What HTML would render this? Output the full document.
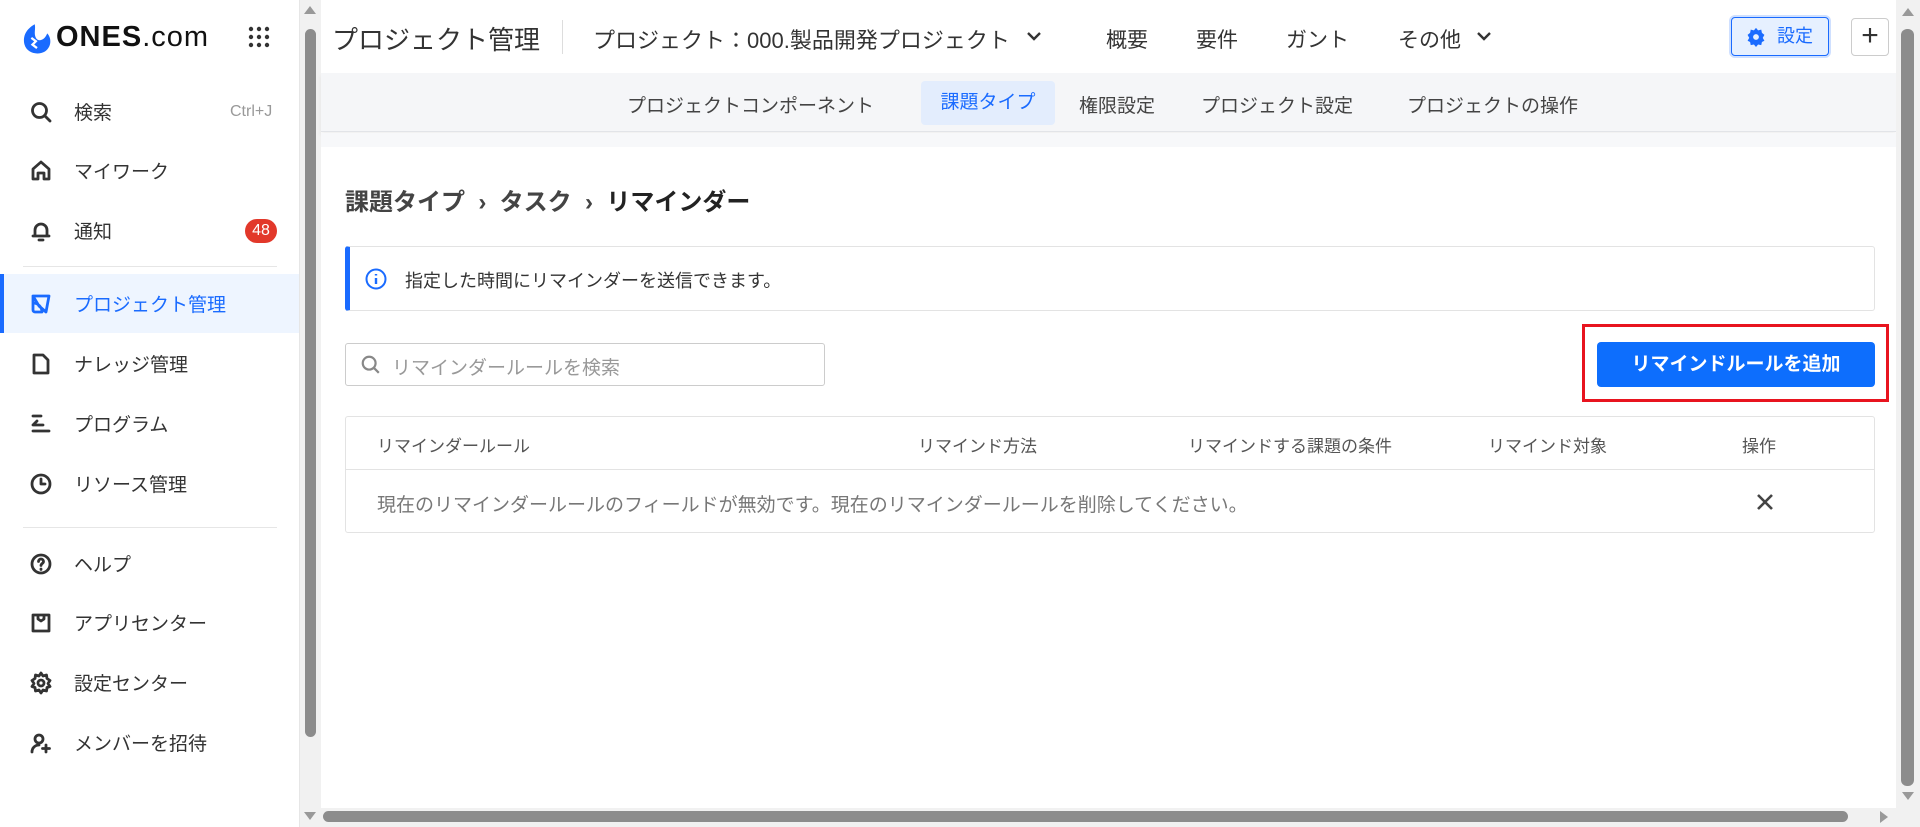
<!DOCTYPE html><html><head><meta charset="utf-8"><style>
*{box-sizing:border-box;margin:0;padding:0}
body{width:1920px;height:827px;overflow:hidden;background:#fff;font-family:"Liberation Sans","Noto Sans CJK JP",sans-serif;color:#303030;position:relative}
.a{position:absolute;white-space:nowrap}
.side .it{position:absolute;left:0;width:299px;height:59px;display:flex;align-items:center;font-size:19px;color:#333}
.side .it svg{position:absolute;left:29px}
.side .it span{position:absolute;left:74px}
.ico{width:24px;height:24px;fill:none;stroke:#333;stroke-width:2.8;stroke-linecap:round;stroke-linejoin:round}
</style></head><body>
<div class="side">
<div class="a" style="left:20px;top:22px;width:34px;height:34px"><svg width="34" height="34" viewBox="0 0 30 30"><path d="M13 2 C6 6 2 12 4 20 C6 27 15 30 22 26 C28 22 28 14 24 10 C22 16 16 18 14 14 C12 10 14 6 13 2Z" fill="#1a6bff"/><path d="M10 14 l4 3 l-3 3 l4 3" stroke="#fff" stroke-width="2" fill="none"/></svg></div>
<div class="a" style="left:56px;top:21px;font-size:29px;font-weight:bold;color:#111;letter-spacing:1px">ONES<span style="font-weight:normal">.com</span></div>
<svg class="a" style="left:248px;top:26px" width="22" height="22"><g fill="#333"><circle cx="3" cy="3" r="2.2"/><circle cx="11" cy="3" r="2.2"/><circle cx="19" cy="3" r="2.2"/><circle cx="3" cy="11" r="2.2"/><circle cx="11" cy="11" r="2.2"/><circle cx="19" cy="11" r="2.2"/><circle cx="3" cy="19" r="2.2"/><circle cx="11" cy="19" r="2.2"/><circle cx="19" cy="19" r="2.2"/></g></svg>
<div class="it" style="top:82px"><svg class="ico" viewBox="0 0 24 24"><circle cx="10.5" cy="10.5" r="7"/><path d="M16 16l5 5"/></svg><span>検索</span><span style="left:230px;font-size:16px;color:#999">Ctrl+J</span></div>
<div class="it" style="top:141px"><svg class="ico" viewBox="0 0 24 24"><path d="M4 20V10l8-7 8 7v10h-5v-6H9v6z"/></svg><span>マイワーク</span></div>
<div class="it" style="top:201px"><svg class="ico" viewBox="0 0 24 24"><path d="M6 17V11a6 6 0 0112 0v6H4h16M10 21h4"/></svg><span>通知</span><div class="a" style="left:245px;top:18px;width:32px;height:24px;border-radius:12px;background:#e2382a;color:#fff;font-size:16px;text-align:center;line-height:24px">48</div></div>
<div class="a" style="left:23px;top:266px;width:254px;height:1px;background:#e6e6e6"></div>
<div class="it" style="top:274px;background:#eef5ff;color:#1a6bff"><div class="a" style="left:0;top:0;width:4px;height:59px;background:#1a6bff"></div><svg class="ico" viewBox="0 0 24 24" style="stroke:#1a6bff"><path d="M4 4h16l-3 16-7-6zM4 4v7a9 9 0 019 9H6a2 2 0 01-2-2z"/></svg><span>プロジェクト管理</span></div>
<div class="it" style="top:334px"><svg class="ico" viewBox="0 0 24 24"><path d="M5 3h9l5 5v13H5z"/></svg><span>ナレッジ管理</span></div>
<div class="it" style="top:394px"><svg class="ico" viewBox="0 0 24 24"><path d="M4 4h8M8 9l-4 4h10M4 19h16"/></svg><span>プログラム</span></div>
<div class="it" style="top:454px"><svg class="ico" viewBox="0 0 24 24"><circle cx="12" cy="12" r="9"/><path d="M12 7v5h4"/></svg><span>リソース管理</span></div>
<div class="a" style="left:23px;top:527px;width:254px;height:1px;background:#e6e6e6"></div>
<div class="it" style="top:534px"><svg class="ico" viewBox="0 0 24 24"><circle cx="12" cy="12" r="9"/><path d="M9.5 9.5a2.5 2.5 0 115 0c0 2-2.5 2-2.5 4M12 17v.5"/></svg><span>ヘルプ</span></div>
<div class="it" style="top:593px"><svg class="ico" viewBox="0 0 24 24"><path d="M4 4h16v16H4zM9 4v4l3 2 3-2V4"/></svg><span>アプリセンター</span></div>
<div class="it" style="top:653px"><svg class="ico" viewBox="0 0 24 24"><circle cx="12" cy="12" r="3"/><path d="M12 2l2 3 3.5-1 .5 3.5 3 2-2 3 2 3-3 1-.5 3.5-3.5-1-2 3-2-3-3.5 1-.5-3.5-3-1 2-3-2-3 3-2 .5-3.5 3.5 1z"/></svg><span>設定センター</span></div>
<div class="it" style="top:713px"><svg class="ico" viewBox="0 0 24 24"><circle cx="10" cy="8" r="4"/><path d="M3 21c0-4 3-7 7-7M17 14v7M13.5 17.5h7"/></svg><span>メンバーを招待</span></div>
</div>
<div class="a" style="left:299px;top:0;width:1px;height:827px;background:#e6e6e6"></div>
<div class="a" style="left:300px;top:0;width:21px;height:827px;background:#f1f1f1"></div>
<div class="a" style="left:305px;top:29px;width:11px;height:708px;background:#8c8c8c;border-radius:6px"></div>
<div class="a" style="left:304px;top:6px;border:6px solid transparent;border-bottom:8px solid #999;border-top:0"></div>
<div class="a" style="left:304px;top:812px;border:6px solid transparent;border-top:8px solid #999;border-bottom:0"></div>
<div class="a" style="left:332px;top:20px;font-size:26px;color:#333">プロジェクト管理</div>
<div class="a" style="left:562px;top:20px;width:1px;height:34px;background:#ddd"></div>
<div class="a" style="left:593px;top:23px;font-size:22px;color:#333">プロジェクト：000.製品開発プロジェクト</div>
<svg class="a" style="left:1026px;top:30px" width="16" height="12"><path d="M2 3l6 6 6-6" stroke="#333" stroke-width="2.4" fill="none"/></svg>
<div class="a" style="left:1106px;top:24px;font-size:21px;color:#333">概要</div>
<div class="a" style="left:1196px;top:24px;font-size:21px;color:#333">要件</div>
<div class="a" style="left:1286px;top:24px;font-size:21px;color:#333">ガント</div>
<div class="a" style="left:1398px;top:24px;font-size:21px;color:#333">その他</div>
<svg class="a" style="left:1476px;top:30px" width="16" height="12"><path d="M2 3l6 6 6-6" stroke="#333" stroke-width="2.4" fill="none"/></svg>
<div class="a" style="left:1731px;top:17px;width:98px;height:39px;border:1.5px solid #1a6bff;border-radius:4px;background:#e6f0ff;box-shadow:0 0 0 2px #cfe0ff;color:#1a6bff;font-size:18px;line-height:36px;padding-left:45px">設定<svg style="position:absolute;left:14px;top:9px" width="20" height="20" viewBox="0 0 24 24"><path d="M12 1l2.5 3 3.8-.8.8 3.8 3 2.5-2 3.5 2 3.5-3 1.5-.8 3.8-3.8-.8-2.5 3-2.5-3-3.8.8-.8-3.8-3-1.5 2-3.5-2-3.5 3-2.5.8-3.8 3.8.8z" fill="#1a6bff"/><circle cx="12" cy="12" r="3.5" fill="#e6f0ff"/></svg></div>
<div class="a" style="left:1851px;top:18px;width:38px;height:38px;border:1px solid #ccc;border-radius:4px;font-size:30px;text-align:center;line-height:34px;color:#333">+</div>
<div class="a" style="left:321px;top:73px;width:1575px;height:59px;background:#f5f6f8;border-bottom:1px solid #e2e4e8;box-shadow:0 3px 4px rgba(0,0,0,0.06)"></div>
<div class="a" style="left:321px;top:133px;width:1575px;height:14px;background:#f7f8fa"></div>
<div class="a" style="left:627px;top:91px;font-size:19px;color:#444">プロジェクトコンポーネント</div>
<div class="a" style="left:921px;top:81px;width:134px;height:44px;background:#e3edfd;border-radius:4px;color:#1a6bff;font-size:19px;text-align:center;line-height:44px">課題タイプ</div>
<div class="a" style="left:1079px;top:91px;font-size:19px;color:#444">権限設定</div>
<div class="a" style="left:1201px;top:91px;font-size:19px;color:#444">プロジェクト設定</div>
<div class="a" style="left:1407px;top:91px;font-size:19px;color:#444">プロジェクトの操作</div>
<div class="a" style="left:345px;top:182px;font-size:24px;color:#444;font-weight:bold">課題タイプ &nbsp;›&nbsp; タスク &nbsp;›&nbsp; <span style="color:#222">リマインダー</span></div>
<div class="a" style="left:345px;top:246px;width:1530px;height:65px;border:1px solid #e3e3e3;border-left:5px solid #1a6bff;border-radius:3px"></div>
<svg class="a" style="left:365px;top:268px" width="22" height="22" viewBox="0 0 22 22"><circle cx="11" cy="11" r="9.5" fill="none" stroke="#1a6bff" stroke-width="2"/><path d="M11 10v6M11 6v1.5" stroke="#1a6bff" stroke-width="2.4"/></svg>
<div class="a" style="left:405px;top:267px;font-size:18px;color:#333">指定した時間にリマインダーを送信できます。</div>
<div class="a" style="left:345px;top:343px;width:480px;height:43px;border:1px solid #ccc;border-radius:3px"></div>
<svg class="a" style="left:360px;top:354px" width="22" height="22" viewBox="0 0 24 24"><circle cx="10" cy="10" r="7" fill="none" stroke="#888" stroke-width="2.4"/><path d="M15.5 15.5l5 5" stroke="#888" stroke-width="2.4"/></svg>
<div class="a" style="left:392px;top:353px;font-size:19px;color:#999">リマインダールールを検索</div>
<div class="a" style="left:1582px;top:324px;width:307px;height:78px;border:3px solid #e8141f"></div>
<div class="a" style="left:1597px;top:342px;width:278px;height:45px;background:#0d6efd;border-radius:4px;color:#fff;font-size:19px;font-weight:bold;text-align:center;line-height:45px">リマインドルールを追加</div>
<div class="a" style="left:345px;top:416px;width:1530px;height:117px;border:1px solid #e3e3e3;border-radius:3px"></div>
<div class="a" style="left:346px;top:469px;width:1528px;height:1px;background:#e3e3e3"></div>
<div class="a" style="left:377px;top:432px;font-size:17px;color:#555">リマインダールール</div>
<div class="a" style="left:918px;top:432px;font-size:17px;color:#555">リマインド方法</div>
<div class="a" style="left:1188px;top:432px;font-size:17px;color:#555">リマインドする課題の条件</div>
<div class="a" style="left:1488px;top:432px;font-size:17px;color:#555">リマインド対象</div>
<div class="a" style="left:1742px;top:432px;font-size:17px;color:#555">操作</div>
<div class="a" style="left:377px;top:490px;font-size:19px;color:#777">現在のリマインダールールのフィールドが無効です。現在のリマインダールールを削除してください。</div>
<svg class="a" style="left:1756px;top:493px" width="18" height="18"><path d="M2 2l14 14M16 2L2 16" stroke="#444" stroke-width="2.6"/></svg>
<div class="a" style="left:1896px;top:0;width:24px;height:827px;background:#f1f1f1"></div>
<div class="a" style="left:1901px;top:29px;width:13px;height:757px;background:#8c8c8c;border-radius:6px"></div>
<div class="a" style="left:1902px;top:8px;border:6px solid transparent;border-bottom:8px solid #999;border-top:0"></div>
<div class="a" style="left:1902px;top:792px;border:6px solid transparent;border-top:8px solid #999;border-bottom:0"></div>
<div class="a" style="left:321px;top:808px;width:1575px;height:19px;background:#f1f1f1"></div>
<div class="a" style="left:323px;top:811px;width:1525px;height:11px;background:#8c8c8c;border-radius:6px"></div>
<div class="a" style="left:1880px;top:811px;border:6px solid transparent;border-left:8px solid #999;border-right:0"></div>
</body></html>
